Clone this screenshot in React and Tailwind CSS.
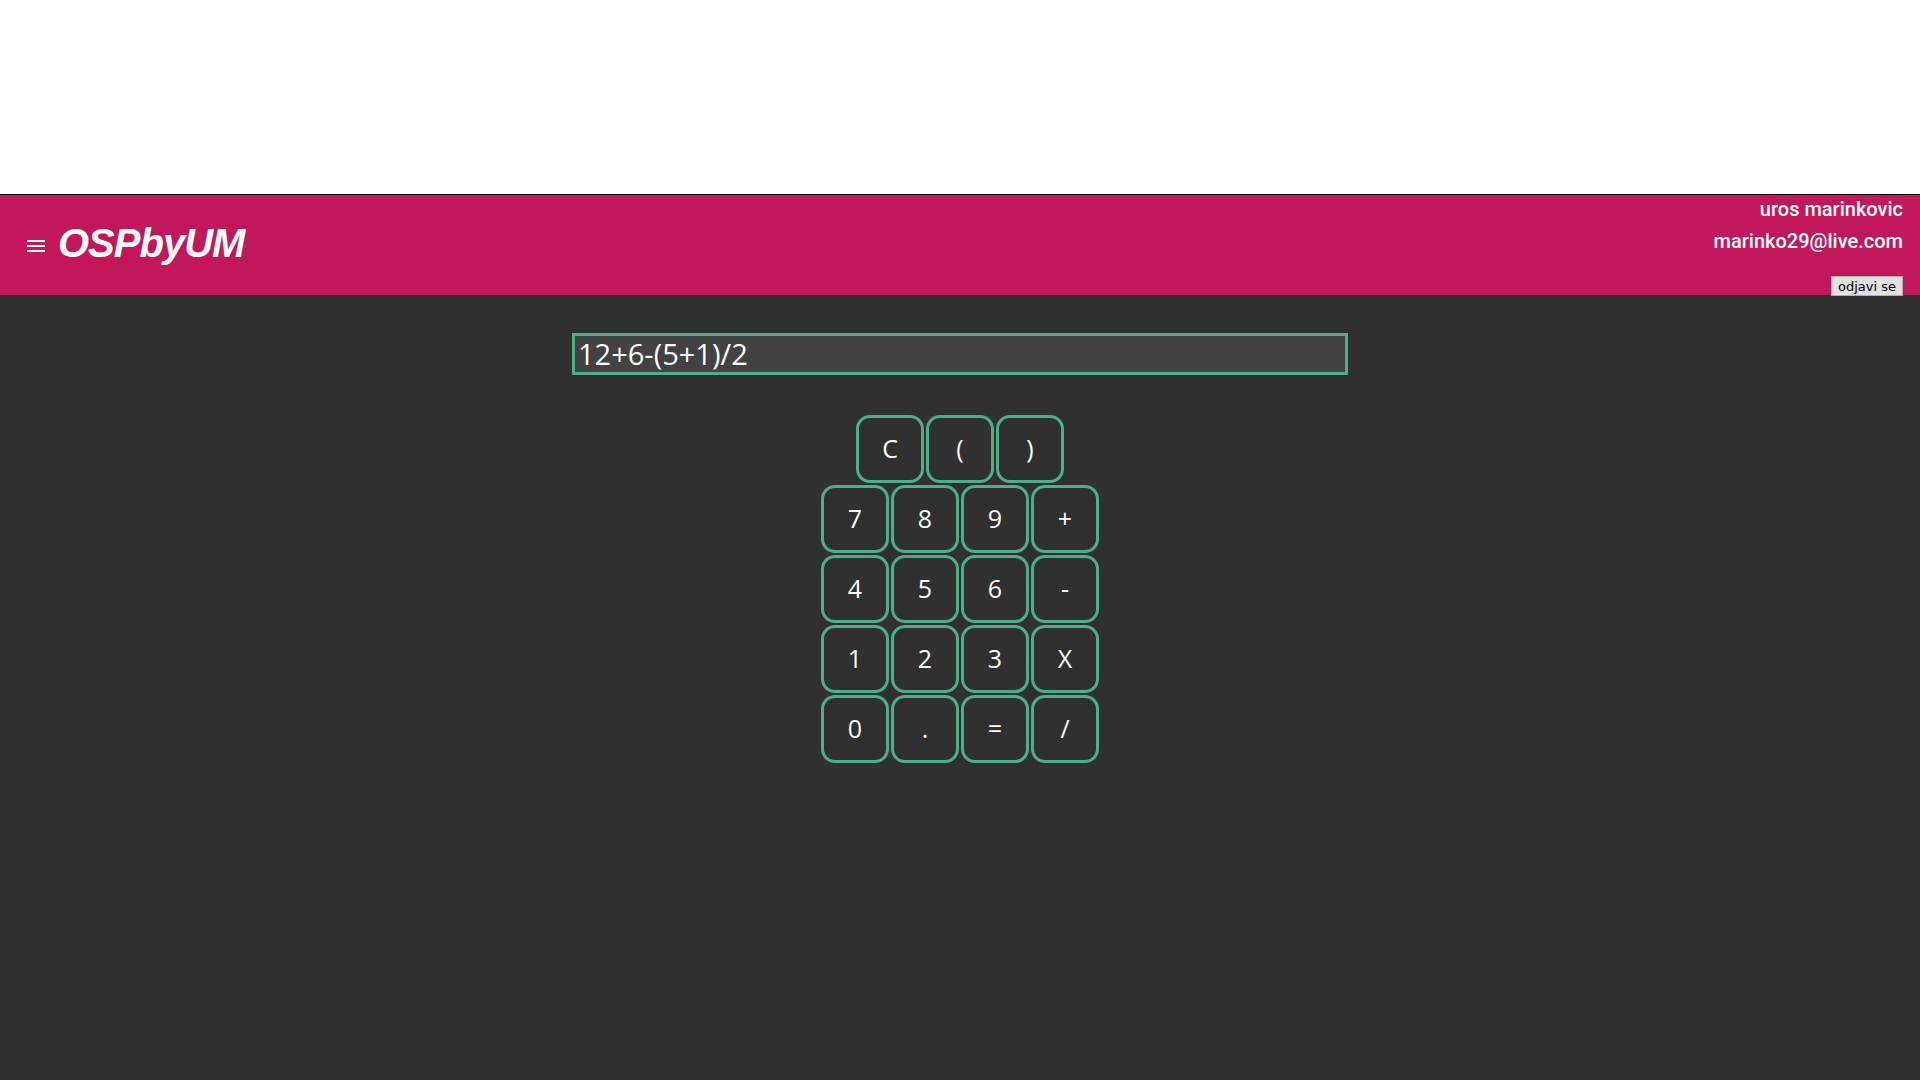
import { useState } from 'react'

const rows = [
  ['C', '(', ')'],
  ['7', '8', '9', '+'],
  ['4', '5', '6', '-'],
  ['1', '2', '3', 'X'],
  ['0', '.', '=', '/'],
]

export default function App() {
  const [expr, setExpr] = useState('12+6-(5+1)/2')

  const press = (key) => {
    if (key === 'C') return setExpr('')
    if (key === '=') return
    setExpr((e) => e + key)
  }

  return (
    <div className="min-h-screen bg-[#303030] flex flex-col">
      {/* empty top area */}
      <div className="h-[194px] bg-white" />

      {/* Header */}
      <header className="h-[101px] bg-[#c2185b] border-t border-black flex items-start justify-between text-white">
        <div className="h-full flex items-center pl-[27px] gap-[13px]">
          <svg width="18" height="13" viewBox="0 0 18 13" className="mt-[2px]">
            <rect x="0" y="0" width="18" height="2" fill="white" />
            <rect x="0" y="5" width="18" height="2" fill="white" />
            <rect x="0" y="10" width="18" height="2" fill="white" />
          </svg>
          <h1 className="font-['Liberation_Sans',Arial,sans-serif] font-bold italic text-[40px] leading-none tracking-[-1px] mb-[4px]">
            OSPbyUM
          </h1>
        </div>
        <div className="flex flex-col items-end pr-[17px] font-['Roboto',sans-serif] font-medium text-[20px]">
          <span className="leading-[28px]">uros marinkovic</span>
          <span className="leading-[28px] mt-[4px]">marinko29@live.com</span>
          <button className="mt-[21px] h-[20px] px-[6px] bg-[#e1e1e1] border border-[#adadad] text-black text-[13px] leading-none font-['DejaVu_Sans',sans-serif] font-normal">
            odjavi se
          </button>
        </div>
      </header>

      {/* Calculator */}
      <main className="flex flex-col items-center pt-[38px]">
        <input
          value={expr}
          onChange={(e) => setExpr(e.target.value)}
          className="w-[776px] h-[42px] bg-[#424242] border-[3px] border-[#4caf87] px-[3px] text-white text-[29px] font-['Open_Sans',sans-serif] outline-none"
        />
        <div className="mt-[39px] flex flex-col items-center">
          {rows.map((row, i) => (
            <div key={i} className="flex">
              {row.map((key) => (
                <button
                  key={key}
                  onClick={() => press(key)}
                  className="w-[68px] h-[68px] m-px rounded-[14px] border-[3px] border-[#4caf87] bg-[#303030] text-white text-[25px] font-['Open_Sans',sans-serif] flex items-center justify-center"
                >
                  {key}
                </button>
              ))}
            </div>
          ))}
        </div>
      </main>
    </div>
  )
}
